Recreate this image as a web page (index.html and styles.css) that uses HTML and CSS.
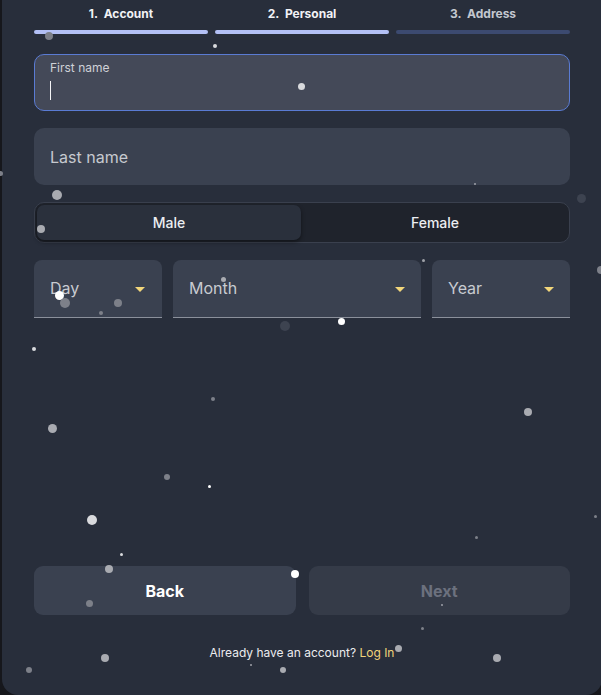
FILE: index.html
```html
<!DOCTYPE html>
<html lang="en">
<head>
<meta charset="utf-8">
<title>Sign up</title>
<link rel="stylesheet" href="styles.css">
</head>
<body>
<div class="card">
  <div class="steps">
    <div class="step done"><span class="step-label">1.&nbsp; Account</span><span class="bar"></span></div>
    <div class="step done"><span class="step-label">2.&nbsp; Personal</span><span class="bar"></span></div>
    <div class="step todo"><span class="step-label">3.&nbsp; Address</span><span class="bar"></span></div>
  </div>

  <div class="form">
    <div class="field focused">
      <span class="float-label">First name</span>
      <span class="caret"></span>
    </div>
    <div class="field">
      <span class="placeholder">Last name</span>
    </div>
    <div class="toggle">
      <div class="opt active">Male</div>
      <div class="opt">Female</div>
    </div>
    <div class="dates">
      <div class="select day"><span>Day</span><i class="arrow"></i></div>
      <div class="select month"><span>Month</span><i class="arrow"></i></div>
      <div class="select year"><span>Year</span><i class="arrow"></i></div>
    </div>
  </div>

  <div class="actions">
    <button class="btn back">Back</button>
    <button class="btn next">Next</button>
  </div>
  <p class="footer">Already have an account? <a class="login">Log In</a></p>

  <div class="snow">
    <span class="dot g" style="left:43px;top:32px;width:8px;height:8px"></span>
    <span class="dot l" style="left:211px;top:44px;width:4px;height:4px"></span>
    <span class="dot l" style="left:296px;top:83px;width:7px;height:7px"></span>
    <span class="dot g" style="left:-4px;top:171px;width:5px;height:5px"></span>
    <span class="dot m" style="left:50px;top:190px;width:10px;height:10px"></span>
    <span class="dot m" style="left:35px;top:225px;width:8px;height:8px"></span>
    <span class="dot t" style="left:472px;top:183px;width:2px;height:2px"></span>
    <span class="dot d" style="left:575px;top:194px;width:9px;height:9px"></span>
    <span class="dot w" style="left:53px;top:291px;width:9px;height:9px"></span>
    <span class="dot g" style="left:58px;top:298px;width:10px;height:10px"></span>
    <span class="dot g" style="left:112px;top:299px;width:8px;height:8px"></span>
    <span class="dot g" style="left:97px;top:311px;width:4px;height:4px"></span>
    <span class="dot m" style="left:219px;top:277px;width:5px;height:5px"></span>
    <span class="dot t" style="left:420px;top:259px;width:3px;height:3px"></span>
    <span class="dot w" style="left:336px;top:318px;width:7px;height:7px"></span>
    <span class="dot d" style="left:278px;top:321px;width:10px;height:10px"></span>
    <span class="dot g" style="left:595px;top:266px;width:8px;height:8px"></span>
    <span class="dot l" style="left:30px;top:347px;width:4px;height:4px"></span>
    <span class="dot g" style="left:209px;top:397px;width:4px;height:4px"></span>
    <span class="dot m" style="left:46px;top:424px;width:9px;height:9px"></span>
    <span class="dot g" style="left:162px;top:474px;width:6px;height:6px"></span>
    <span class="dot w" style="left:206px;top:485px;width:3px;height:3px"></span>
    <span class="dot l" style="left:85px;top:515px;width:10px;height:10px"></span>
    <span class="dot m" style="left:522px;top:408px;width:8px;height:8px"></span>
    <span class="dot g" style="left:592px;top:515px;width:3px;height:3px"></span>
    <span class="dot g" style="left:473px;top:536px;width:3px;height:3px"></span>
    <span class="dot l" style="left:118px;top:553px;width:3px;height:3px"></span>
    <span class="dot m" style="left:103px;top:565px;width:8px;height:8px"></span>
    <span class="dot w" style="left:289px;top:570px;width:8px;height:8px"></span>
    <span class="dot g" style="left:84px;top:600px;width:7px;height:7px"></span>
    <span class="dot t" style="left:439px;top:604px;width:2px;height:2px"></span>
    <span class="dot g" style="left:419px;top:627px;width:3px;height:3px"></span>
    <span class="dot m" style="left:99px;top:654px;width:8px;height:8px"></span>
    <span class="dot g" style="left:24px;top:667px;width:6px;height:6px"></span>
    <span class="dot m" style="left:393px;top:645px;width:7px;height:7px"></span>
    <span class="dot m" style="left:491px;top:654px;width:8px;height:8px"></span>
    <span class="dot m" style="left:278px;top:667px;width:6px;height:6px"></span>
    <span class="dot t" style="left:248px;top:664px;width:2px;height:2px"></span>
  </div>
</div>
</body>
</html>
```

FILE: styles.css
```css
* { box-sizing: border-box; }

html, body {
  margin: 0;
  padding: 0;
  height: 100%;
  overflow: hidden;
}

body {
  background: #16171c;
  font-family: Inter, "Noto Sans", "Liberation Sans", sans-serif;
}

.card {
  position: relative;
  margin-left: 2px;
  width: 600px;
  height: 695px;
  background: #282e3b;
  border-radius: 0 0 16px 16px;
  padding: 6px 32px 34px;
  display: flex;
  flex-direction: column;
}

.steps {
  display: flex;
  gap: 7px;
}

.step {
  flex: 1;
  display: flex;
  flex-direction: column;
  align-items: center;
}

.step-label {
  font-size: 12px;
  line-height: 16px;
  font-weight: 700;
  color: #f1f2f5;
}

.step.todo .step-label { color: #c3c7cf; }

.bar {
  margin-top: 8px;
  width: 100%;
  height: 4px;
  border-radius: 2px;
  background: #b3c0f5;
}

.step.todo .bar { background: #3c4a70; }

.form {
  margin-top: 20px;
  display: flex;
  flex-direction: column;
  gap: 17px;
}

.field {
  height: 57px;
  border-radius: 10px;
  background: #3a4150;
  padding: 0 16px;
  display: flex;
  align-items: center;
}

.field.focused {
  background: #444958;
  border: 1px solid #5a7bd3;
  flex-direction: column;
  align-items: flex-start;
  justify-content: flex-start;
  padding: 5px 15px 0;
}

.float-label {
  font-size: 12px;
  line-height: 16px;
  color: #cfd1d7;
}

.caret {
  margin-top: 5px;
  width: 1px;
  height: 19px;
  background: #f4f4f6;
}

.placeholder {
  font-size: 16px;
  color: #c6c9cf;
}

.toggle {
  height: 41px;
  border: 1px solid #3a404e;
  border-radius: 10px;
  background: #1f232c;
  padding: 2px;
  display: flex;
  gap: 2px;
}

.opt {
  flex: 1;
  display: flex;
  align-items: center;
  justify-content: center;
  font-size: 14px;
  font-weight: 500;
  color: #eceef2;
  border-radius: 7px;
}

.opt.active {
  background: #2a303c;
  box-shadow: 0 2px 4px rgba(0, 0, 0, 0.45);
}

.dates {
  display: flex;
  gap: 11px;
}

.select {
  height: 58px;
  background: #3a4150;
  border-radius: 8px 8px 0 0;
  border-bottom: 1px solid #8b909b;
  padding: 0 17px 2px 16px;
  display: flex;
  align-items: center;
  justify-content: space-between;
  font-size: 16px;
  color: #c8cbd1;
}

.day { width: 128px; }
.month { flex: 1; padding-right: 16px; }
.year { width: 138px; padding-right: 16px; }

.arrow {
  width: 0;
  height: 0;
  border-left: 5px solid transparent;
  border-right: 5px solid transparent;
  border-top: 5px solid #f2d67a;
  margin-top: 4px;
}

.actions {
  margin-top: auto;
  display: flex;
  gap: 13px;
}

.btn {
  flex: 1;
  height: 49px;
  border: 0;
  border-radius: 9px;
  font-family: inherit;
  font-size: 16px;
  font-weight: 700;
}

.btn.back {
  background: #3a4150;
  color: #ffffff;
}

.btn.next {
  background: #353b48;
  color: #6c717e;
}

.footer {
  margin: 30px 0 0;
  text-align: center;
  font-size: 12px;
  line-height: 16px;
  color: #ececef;
}

.login { color: #f0d47a; }

.snow {
  position: absolute;
  inset: 0;
  pointer-events: none;
}

.dot {
  position: absolute;
  border-radius: 50%;
}

.dot.w { background: #ffffff; }
.dot.l { background: #d9dadd; }
.dot.m { background: #a9abb1; }
.dot.g { background: #7d8089; }
.dot.d { background: #3d4350; }
.dot.t { background: #9ea1a8; }
```
